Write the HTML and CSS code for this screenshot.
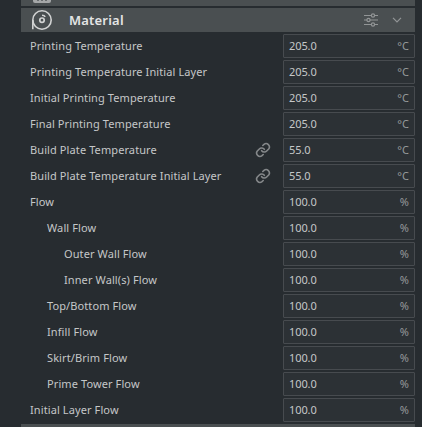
FILE: index.html
```html
<!DOCTYPE html>
<html lang="en">
<head>
<meta charset="utf-8">
<title>Material settings</title>
<link rel="stylesheet" href="styles.css">
</head>
<body>
<main class="panel">
  <div class="category category-prev">
    <svg width="20" height="6" viewBox="0 0 20 6"><path d="M1 0h18v1a2 2 0 0 1-2 2H3a2 2 0 0 1-2-2z" fill="#a5a7a8"/><path d="M5 .5h11" stroke="#686c6e" stroke-dasharray="2 2"/></svg>
  </div>
  <header class="category">
    <svg class="spool" width="22" height="22" viewBox="0 0 22 22" fill="none" stroke="#d2d3d3" stroke-width="1.6"><circle cx="11" cy="11" r="9.2"/><path d="M1.8 11v9.2"/><circle cx="11" cy="11.2" r="2.2" stroke-width="1.7"/><path d="M11 6.2q2.4 0 3.2 1.6"/></svg>
    <h1 class="title">Material</h1>
    <svg class="tune" width="16" height="16" viewBox="0 0 16 16" fill="none" stroke="#929596" stroke-width="1.2"><path d="M1 3.5h7.5M11.5 3.5H15M1 8h3M7 8h8M1 12.5h7.5M11.5 12.5H15"/><circle cx="10" cy="3.5" r="1.6"/><circle cx="5.5" cy="8" r="1.6"/><circle cx="10" cy="12.5" r="1.6"/></svg>
    <svg class="chevron" width="10" height="6" viewBox="0 0 10 6" fill="none" stroke="#929596" stroke-width="1.2"><path d="M1 .8l4 4 4-4"/></svg>
  </header>
  <section class="settings">
    <div class="row"><span class="label">Printing Temperature</span><div class="field"><span>205.0</span><span class="unit">°C</span></div></div>
    <div class="row"><span class="label">Printing Temperature Initial Layer</span><div class="field"><span>205.0</span><span class="unit">°C</span></div></div>
    <div class="row"><span class="label">Initial Printing Temperature</span><div class="field"><span>205.0</span><span class="unit">°C</span></div></div>
    <div class="row"><span class="label">Final Printing Temperature</span><div class="field"><span>205.0</span><span class="unit">°C</span></div></div>
    <div class="row"><span class="label">Build Plate Temperature</span><svg class="link" width="16" height="16" viewBox="0 0 24 24"><use href="#chain"/></svg><div class="field"><span>55.0</span><span class="unit">°C</span></div></div>
    <div class="row"><span class="label">Build Plate Temperature Initial Layer</span><svg class="link" width="16" height="16" viewBox="0 0 24 24"><g id="chain"><path d="M10 13a5 5 0 0 0 7.5.5l3-3a5 5 0 0 0-7-7l-1.8 1.7"/><path d="M14 11a5 5 0 0 0-7.5-.5l-3 3a5 5 0 0 0 7 7l1.8-1.7"/></g></svg><div class="field"><span>55.0</span><span class="unit">°C</span></div></div>
    <div class="row"><span class="label">Flow</span><div class="field"><span>100.0</span><span class="unit">%</span></div></div>
    <div class="row level-1"><span class="label">Wall Flow</span><div class="field"><span>100.0</span><span class="unit">%</span></div></div>
    <div class="row level-2"><span class="label">Outer Wall Flow</span><div class="field"><span>100.0</span><span class="unit">%</span></div></div>
    <div class="row level-2"><span class="label">Inner Wall(s) Flow</span><div class="field"><span>100.0</span><span class="unit">%</span></div></div>
    <div class="row level-1"><span class="label">Top/Bottom Flow</span><div class="field"><span>100.0</span><span class="unit">%</span></div></div>
    <div class="row level-1"><span class="label">Infill Flow</span><div class="field"><span>100.0</span><span class="unit">%</span></div></div>
    <div class="row level-1"><span class="label">Skirt/Brim Flow</span><div class="field"><span>100.0</span><span class="unit">%</span></div></div>
    <div class="row level-1"><span class="label">Prime Tower Flow</span><div class="field"><span>100.0</span><span class="unit">%</span></div></div>
    <div class="row"><span class="label">Initial Layer Flow</span><div class="field"><span>100.0</span><span class="unit">%</span></div></div>
  </section>
  <div class="category category-next"></div>
</main>
</body>
</html>
```
FILE: styles.css
```css
* {
  box-sizing: border-box;
}

body {
  margin: 0;
  background: #272c30;
  color: #c5c7c8;
  font: 11px/16px "Noto Sans", sans-serif;
  overflow: hidden;
}

.panel {
  display: flex;
  flex-direction: column;
  gap: 2px;
  height: 427px;
  padding: 0 7px 0 21px;
}

.category {
  display: flex;
  align-items: center;
  flex: none;
  height: 24px;
  padding: 0 13px 0 10px;
  background: #4a4f51;
}

.category-prev {
  height: 6px;
  padding-left: 11px;
}

.category-next {
  height: 3px;
}

.title {
  flex: 1;
  margin: 0 0 0 16px;
  color: #e4e5e5;
  font-size: 13px;
  font-weight: 600;
  line-height: 18px;
  letter-spacing: 0.2px;
}

.tune {
  margin-right: 13px;
}

.settings {
  display: flex;
  flex-direction: column;
  gap: 2px;
}

.row {
  display: flex;
  align-items: center;
  height: 24px;
  padding-left: 9px;
}

.level-1 {
  padding-left: 26px;
}

.level-2 {
  padding-left: 43px;
}

.label {
  flex: 1;
  white-space: nowrap;
  letter-spacing: 0.1px;
}

.link {
  margin-right: 12px;
  fill: none;
  stroke: #85888a;
  stroke-width: 2.4;
  stroke-linecap: round;
}

.field {
  display: flex;
  justify-content: space-between;
  align-items: center;
  width: 132px;
  height: 24px;
  padding: 0 5px;
  border: 1px solid #474b4f;
  border-radius: 1px;
  background: #2c3135;
  letter-spacing: -0.1px;
}

.unit {
  color: #96999b;
  letter-spacing: 0;
}
```
